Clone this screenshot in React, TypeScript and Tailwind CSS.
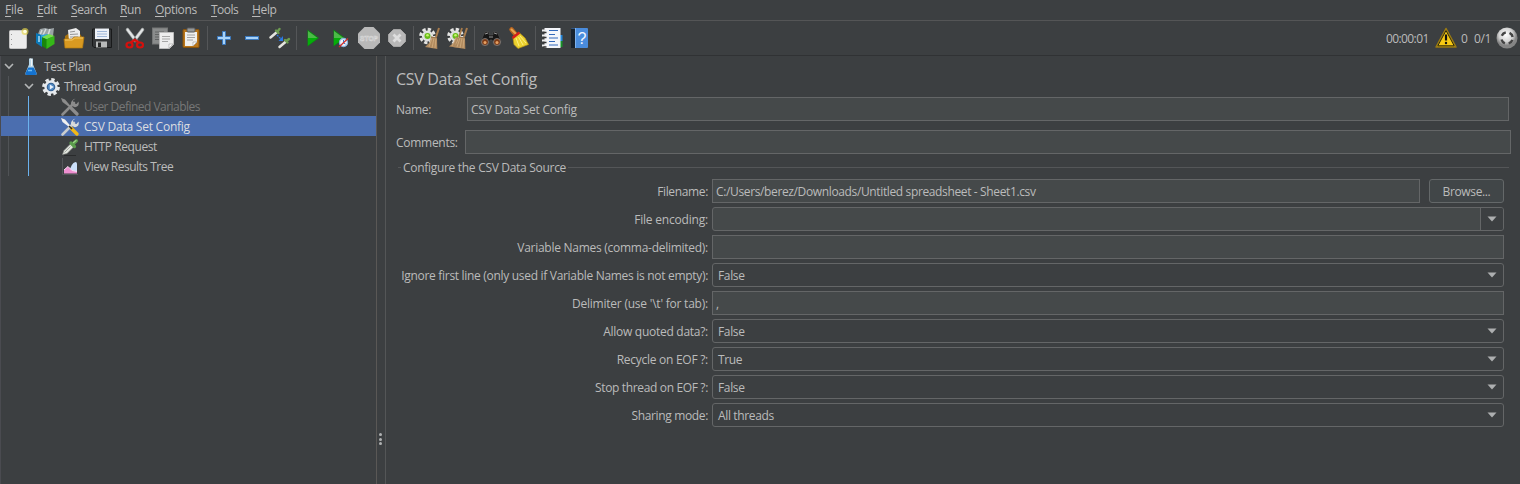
import type { ReactNode } from "react";

type IconProps = { children: ReactNode; size?: string; box?: string };

function Icon({ children, size = "w-[22px] h-[22px]", box = "0 0 22 22" }: IconProps) {
  return (
    <svg viewBox={box} className={"block shrink-0 overflow-visible " + size} fill="none">
      {children}
    </svg>
  );
}

const NewIcon = () => (
  <Icon>
    <rect x="2.500" y="3.500" width="17" height="18" rx="1" fill="#ececec" stroke="#c4c4c4" />
    <path d="M4.500 7v1M4.500 12v1M4.500 17v1" stroke="#999" />
    <circle cx="18" cy="4.500" r="3.500" fill="#e8d84c" opacity=".65" />
    <circle cx="18" cy="4.500" r="1.800" fill="#fffde0" />
  </Icon>
);
const TemplateIcon = () => (
  <Icon>
    <path d="M3 7l2-5 5-1 4 1 5-1-1 8-9 3z" fill="#9ba3a6" />
    <path d="M7 3l-2 5M11 2L8 8M15 2l-2 6" stroke="#d5dadd" strokeWidth="1.500" />
    <path d="M1 6l6 2v12l-6-4z" fill="#0a78b8" />
    <path d="M6 8l7-1v10l-6 2z" fill="#2ba3e0" />
    <path d="M7 10l5 2v10l-5-3z" fill="#19860c" />
    <path d="M11.500 12l8-3v8l-8 5z" fill="#35b818" />
    <path d="M7 10l7-3 5.500 2-8 3z" fill="#77e04b" />
    <path d="M4 9v6" stroke="#d8f4ff" strokeWidth="1.500" opacity=".8" />
  </Icon>
);
const OpenIcon = () => (
  <Icon>
    <path d="M2 9l3-2h12l2 3v9H2z" fill="#a87310" />
    <path d="M5 3l8-2 4 3v10H6z" fill="#ececec" />
    <path d="M7 5l5-.7M7 7.500l8-.5M7 10h8" stroke="#969696" />
    <path d="M1 12h8l2-2h10l-1.500 11H2z" fill="#d99a21" stroke="#b57b10" strokeWidth=".7" />
    <path d="M2 13h7.500l2-2H20" stroke="#f6c967" />
  </Icon>
);
const SaveIcon = () => (
  <Icon>
    <path d="M1.500 2h19v18.500H3L1.500 19z" fill="#353739" stroke="#191a1b" />
    <rect x="4" y="1.500" width="14" height="10.500" fill="#edf1f7" />
    <path d="M6 4.500h10M6 7h10M6 9.500h10" stroke="#9eb6d8" />
    <rect x="5" y="14.500" width="11" height="6" fill="#b9bbbb" />
    <rect x="7" y="15.500" width="3" height="4.500" fill="#252627" />
  </Icon>
);
const CutIcon = () => (
  <Icon>
    <path d="M2 3q0-2 2-2l10 13-3 1zM20 3q0-2-2-2L8 14l3 1z" fill="#e2e5e5" stroke="#9a9e9e" strokeWidth=".6" />
    <ellipse cx="5.500" cy="18" rx="3" ry="2.500" stroke="#d5100d" strokeWidth="2.200" />
    <ellipse cx="16" cy="18" rx="3" ry="2.500" stroke="#d5100d" strokeWidth="2.200" />
    <path d="M6.500 15.500l4.300-2.500 4.200 2.500" stroke="#d5100d" strokeWidth="2.400" />
  </Icon>
);
const CopyIcon = () => (
  <Icon>
    <rect x=".5" y="1" width="15" height="16" fill="#8a8c8c" stroke="#747676" />
    <path d="M3 5h9M3 7.500h5M3 10h4M3 12.500h4" stroke="#626464" />
    <path d="M7.500 5.500h14v12l-4 4h-10z" fill="#ededed" stroke="#bcbcbc" />
    <path d="M10 9.500h8M10 12h8M10 14.500h6" stroke="#a7a7a7" />
    <path d="M21 17h-4v4z" fill="#fff" stroke="#aaa" strokeWidth=".7" />
  </Icon>
);
const PasteIcon = () => (
  <Icon>
    <rect x="3" y="2.500" width="16" height="18" rx="1" fill="#b9761a" stroke="#87530d" />
    <path d="M5 5h12v10l-4 4H5z" fill="#efefed" />
    <rect x="7" y="1" width="8" height="4" rx="1" fill="#96999a" stroke="#595b5c" />
    <path d="M7 8h8M7 10.500h8M7 13h6" stroke="#a2a2a2" />
    <path d="M17 15h-4v4z" fill="#fff" stroke="#999" strokeWidth=".6" />
  </Icon>
);
const PlusIcon = () => (
  <Icon>
    <path d="M9.500 4.500h3v5h5v3h-5v5h-3v-5h-5v-3h5z" fill="#a7d2f8" stroke="#3a78bd" />
  </Icon>
);
const MinusIcon = () => (
  <Icon>
    <rect x="4.500" y="9.500" width="13" height="3" fill="#a7d2f8" stroke="#3a78bd" />
  </Icon>
);
const ToggleIcon = () => (
  <Icon>
    <path d="M1.500 10.500L8 5" stroke="#e4e4df" strokeWidth="2.500" strokeLinecap="round" />
    <path d="M7 3.500l2.500 2.500M8.500 4.500L10.500 2" stroke="#6c9c50" strokeWidth="2.400" strokeLinecap="round" />
    <path d="M10.500 20L17 14.500" stroke="#e4e4df" strokeWidth="2.500" strokeLinecap="round" />
    <path d="M16 13l2.500 2.500M17.500 14l2.500-2" stroke="#6c9c50" strokeWidth="2.400" strokeLinecap="round" />
    <path d="M8 8l4 4" stroke="#2b78e4" strokeWidth="1.300" strokeDasharray="2 1" />
    <path d="M14 9v5H9.500z" fill="#2b78e4" />
  </Icon>
);
const PlayShape = () => (
  <>
    <path d="M5.500 2.500l11.500 8.500-11.500 8.500z" fill="#0a8a12" />
    <path d="M6 4l9.500 7H6z" fill="#4cba48" />
    <path d="M6 11h10l-10 7.500z" fill="#05ad0a" />
  </>
);
const PlayIcon = () => (
  <Icon>
    <PlayShape />
  </Icon>
);
const PlayNoTimerIcon = () => (
  <Icon>
    <g transform="translate(-2 0)">
      <PlayShape />
    </g>
    <circle cx="13.500" cy="15.500" r="4" fill="#eef4fb" stroke="#8eb2dd" strokeWidth="1.300" />
    <path d="M13.500 13v3l2 1" stroke="#3977c9" />
    <path d="M9 20l9-8.500" stroke="#d22d2a" strokeWidth="1.300" />
  </Icon>
);
const StopIcon = () => (
  <Icon>
    <path d="M6.500 0h9L22 6.500v9L15.500 22h-9L0 15.500v-9z" fill="#b9b9b9" />
    <text x="2" y="14" textLength="18" lengthAdjust="spacingAndGlyphs" fontSize="8" fontWeight="700" fontFamily="Liberation Sans, sans-serif" fill="#b4b4b4" stroke="#dcdcdc" strokeWidth=".6" className="tracking-normal">STOP</text>
  </Icon>
);
const ShutdownIcon = () => (
  <Icon>
    <path d="M7.500 2.500h7l5 5v7l-5 5h-7l-5-5v-7z" fill="#b8b8b8" stroke="#b0b0b0" strokeWidth=".8" />
    <path d="M7.500 7.500l7 7M14.500 7.500l-7 7" stroke="#dedede" strokeWidth="2.800" />
  </Icon>
);
const GearBroom = ({ double = false }: { double?: boolean }) => (
  <Icon>
    <circle cx="8.500" cy="9" r="6.800" stroke="#e4e4e2" strokeWidth="3" strokeDasharray="3.300 2.040" />
    <circle cx="8.500" cy="9" r="5" fill="#dcdedb" stroke="#f1f1f1" />
    <circle cx="8.500" cy="9" r="3" fill="#68bc18" />
    <circle cx="8.500" cy="8.300" r="1.300" fill="#c5f36c" />
    {double && (
      <>
        <path d="M15 1l-3 9" stroke="#a97c4c" strokeWidth="1.800" />
        <path d="M8.500 10l5 1v10L2 19.500l5-4z" fill="#b18a5e" />
        <path d="M9 11l-4 8M11 12l-3 8" stroke="#d3af80" strokeWidth=".8" />
      </>
    )}
    <path d="M20 1l-3 9" stroke="#a97c4c" strokeWidth="2" />
    <path d="M12 9.500l6 1 .3 11.500L6 20l5-5z" fill="#b18a5e" />
    <path d="M13 11l-3 9M15 11l-2 10M17 11l-1 10" stroke="#d3af80" strokeWidth=".8" />
    <path d="M12 10l6 1" stroke="#8f693f" strokeWidth=".7" />
  </Icon>
);
const BinocularsIcon = () => (
  <Icon>
    <path d="M3 9l2-4h4v3h4V5h4l2 4 2 5-1 4h-6l-2-5h-2l-2 5H2l-1-4z" fill="#171717" stroke="#4f4f4f" strokeWidth=".7" />
    <path d="M5 7l3-1M14 6l3 1M9 10h4" stroke="#9a9a9a" />
    <circle cx="5" cy="15" r="3.500" fill="#7e3b16" stroke="#777" />
    <circle cx="17" cy="15" r="3.500" fill="#7e3b16" stroke="#777" />
    <circle cx="5" cy="15.500" r="1.500" fill="#e6a062" />
    <circle cx="17" cy="15.500" r="1.500" fill="#e6a062" />
  </Icon>
);
const BroomIcon = () => (
  <Icon>
    <path d="M3.500 2.500l5 6" stroke="#b76520" strokeWidth="4.500" strokeLinecap="round" />
    <path d="M3.500 2.500l4 4" stroke="#e9a451" strokeWidth="2" strokeLinecap="round" />
    <path d="M5 11l6.500-5 5.500 5 3.500 6.500L10 21.500l-4-4z" fill="#ecd22f" stroke="#bb9815" strokeWidth=".7" />
    <path d="M8 11l3 8M10.500 10l4.500 8M12 9l6 7" stroke="#fff289" strokeWidth=".9" />
    <path d="M4.500 11l7-5.500" stroke="#d51f19" strokeWidth="2.500" />
  </Icon>
);
const NotebookIcon = () => (
  <Icon>
    <path d="M17 8h4.500v6H17z" fill="#2588dc" />
    <path d="M17 14h4.500v6H17z" fill="#169329" />
    <rect x="3.500" y="1" width="16" height="20" fill="#f4f6fa" />
    <path d="M8 3.500h9M8 7.500h6M8 11h9M8 14.500h6M8 18h9" stroke="#3269bb" />
    <path d="M1 3.500h4M1 8.500h4M1 13.500h4M1 18.500h4" stroke="#ededed" strokeWidth="2" />
    <path d="M2.500 5.500h3M2.500 10.500h3M2.500 15.500h3M2.500 20h3" stroke="#343434" strokeWidth="1.500" />
  </Icon>
);
const HelpIcon = () => (
  <Icon>
    <rect x="2" y="1" width="17" height="20" rx="1" fill="#4a8cdc" />
    <path d="M2 1.500h4V21H2z" fill="#18222d" />
    <path d="M6.500 1v20" stroke="#7fb2eb" />
    <text x="12.700" y="16.500" textAnchor="middle" fontSize="16" fontFamily="Liberation Sans, sans-serif" fill="#f3f7ff">?</text>
  </Icon>
);
const WarningIcon = () => (
  <Icon>
    <path d="M11 1.500l10 18.500H1z" fill="#f6c914" stroke="#9b7b12" strokeWidth="1.500" strokeLinejoin="round" />
    <path d="M11 3.500l8.200 15.300H2.800z" stroke="#2c260b" strokeLinejoin="round" />
    <path d="M11 7.500v6" stroke="#111" strokeWidth="2.200" />
    <circle cx="11" cy="16" r="1.200" fill="#111" />
  </Icon>
);
const StatusIcon = () => (
  <Icon>
    <defs>
      <radialGradient id="ball" cx=".45" cy=".35">
        <stop stopColor="#fff" />
        <stop offset=".65" stopColor="#d4d4d4" />
        <stop offset="1" stopColor="#858585" />
      </radialGradient>
    </defs>
    <circle cx="11" cy="11" r="10.500" fill="url(#ball)" />
    <circle cx="11" cy="11" r="5.700" stroke="#444" strokeWidth="2.400" strokeDasharray="5 3.953" strokeDashoffset="-1.976" />
  </Icon>
);

const small = "w-[18px] h-[18px]";
const FlaskIcon = () => (
  <Icon size={small} box="0 0 18 18">
    <path d="M7 .5h4v6L14.500 15q.5 2-1 2h-9q-1.500 0-1-2L7 6.500z" fill="#b9d6e6" />
    <path d="M8 1h1.500v7" stroke="#f2f6f8" />
    <path d="M6.300 9.500h5.400l2.800 5.500q.5 2-1 2h-9q-1.500 0-1-2z" fill="#1473d0" />
    <path d="M6 12.500h4" stroke="#6cbcf6" strokeWidth="1.500" />
  </Icon>
);
const GearIcon = () => (
  <Icon size={small} box="0 0 18 18">
    <circle cx="9" cy="9" r="7.500" stroke="#e5e8ea" strokeWidth="2.800" strokeDasharray="3.400 2.490" />
    <circle cx="9" cy="9" r="5.500" fill="#356193" stroke="#e6eaee" strokeWidth="2.400" />
    <circle cx="9" cy="9" r="3.200" fill="#4f88c1" />
    <path d="M7.800 6.500l4 2.500-4 2.500z" fill="#e8f3ff" />
  </Icon>
);
const ToolsIcon = ({ dim = false }: { dim?: boolean }) => (
  <Icon size={small} box="0 0 18 18">
    <path d="M1.500 16.500L13 5" stroke={dim ? "#8c8c8c" : "#c9cccd"} strokeWidth="2.600" strokeLinecap="round" />
    <path d="M14.500.5l-2.500 2 .5 3 3 .5 2-2.500q1 3.500-1.500 5t-4.500-.5q-2.500-2-1-4.500t4-3z" fill={dim ? "#8c8c8c" : "#d9dcdd"} />
    <path d="M0 0l4 1.500 6 7-1.200 1L1.500 4z" fill={dim ? "#8c8c8c" : "#f0f0f0"} />
    <path d="M10.500 10.500l5.500 5.500" stroke={dim ? "#8c8c8c" : "#f0b818"} strokeWidth="3.400" strokeLinecap="round" />
    {!dim && <path d="M8 8l3 3" stroke="#302d26" strokeWidth="1.600" />}
  </Icon>
);
const DropperIcon = () => (
  <Icon size={small} box="0 0 18 18">
    <path d="M1.500 16.500l1.500-4L10 5.500l3 3-7 7z" fill="#e2e6df" stroke="#8b8f89" strokeWidth=".6" />
    <path d="M3.500 14.500l6-6" stroke="#a6aaa3" />
    <path d="M10 5l3.500 3.500M12 6l3.500-3.200" stroke="#5a9c4c" strokeWidth="3.200" strokeLinecap="round" />
    <path d="M12.500 4.500L15 2.500" stroke="#a0d48b" strokeWidth="1.200" strokeLinecap="round" />
    <path d="M3 17.500h12" stroke="#292b2c" />
  </Icon>
);
const ChartIcon = () => (
  <Icon size={small} box="0 0 18 18">
    <path d="M1.500 0v16.500H17" stroke="#54575a" />
    <path d="M8 15q2-10 6.500-11 1.500 0 1.500 2v9z" fill="#cbe0fb" />
    <path d="M3 15.500v-3.500l4-3.500 4 4 5 1v2z" fill="#ee8fd0" />
    <path d="M3 12l4-3.500 4 4 5 1" stroke="#f8dff2" />
  </Icon>
);

function Separator() {
  return <div className="mx-[5px] h-6 w-px shrink-0 bg-[#545658]" />;
}

const menus = [
  { label: "File", cls: "w-8 tracking-[-0.200px]" },
  { label: "Edit", cls: "w-[34px]" },
  { label: "Search", cls: "w-[49px] tracking-[-0.400px]" },
  { label: "Run", cls: "w-[35px]" },
  { label: "Options", cls: "w-14" },
  { label: "Tools", cls: "w-[41px] tracking-[-0.550px]" },
  { label: "Help", cls: "w-10" },
];

function MenuBar() {
  return (
    <nav className="flex h-[21px] border-b border-[#545556] pl-[5px] leading-5">
      {menus.map((m) => (
        <div key={m.label} className={"shrink-0 " + m.cls}>
          <span className="underline decoration-1 underline-offset-2">{m.label[0]}</span>
          {m.label.slice(1)}
        </div>
      ))}
    </nav>
  );
}

function Toolbar() {
  return (
    <div className="flex h-[35px] items-center border-b border-[#303234] pl-[7px]">
      <div className="flex gap-[6px]">
        <NewIcon />
        <TemplateIcon />
        <OpenIcon />
        <SaveIcon />
      </div>
      <Separator />
      <div className="flex gap-[6px]">
        <CutIcon />
        <CopyIcon />
        <PasteIcon />
      </div>
      <Separator />
      <div className="flex gap-[6px]">
        <PlusIcon />
        <MinusIcon />
        <ToggleIcon />
      </div>
      <Separator />
      <div className="flex gap-[6px]">
        <PlayIcon />
        <PlayNoTimerIcon />
        <StopIcon />
        <ShutdownIcon />
      </div>
      <Separator />
      <div className="flex gap-[6px]">
        <GearBroom />
        <GearBroom double />
      </div>
      <Separator />
      <div className="flex gap-[6px]">
        <BinocularsIcon />
        <BroomIcon />
      </div>
      <Separator />
      <div className="flex gap-[6px]">
        <NotebookIcon />
        <HelpIcon />
      </div>
      <div className="ml-auto flex items-center pr-[2px]">
        <span className="w-[49px] pt-0.5 tracking-[-0.600px]">00:00:01</span>
        <WarningIcon />
        <span className="ml-1 w-[13px] pt-0.5">0</span>
        <span className="w-[22px] pt-0.5">0/1</span>
        <StatusIcon />
      </div>
    </div>
  );
}

const Chevron = () => (
  <Icon size="w-[10px] h-[10px]" box="0 0 10 10">
    <path d="M1 2l4 4 4-4" stroke="#b4b6b7" strokeWidth="1.600" />
  </Icon>
);

function Tree() {
  return (
    <aside className="w-[377px] shrink-0 border-l border-r border-l-[#4a4b50] border-r-[#5a5856]">
      <div className="flex h-5 items-center pl-[3px] pt-0.5 tracking-[-0.450px]">
        <Chevron />
        <span className="ml-[8px] mr-[4px]"><FlaskIcon /></span>
        Test Plan
      </div>
      <div className="flex">
        <div className="ml-[7px] h-[100px] w-px bg-[#505356]" />
        <div className="grow">
          <div className="flex h-5 items-center pl-[15px] pt-0.5 tracking-[-0.500px]">
            <Chevron />
            <span className="ml-[8px] mr-[4px]"><GearIcon /></span>
            Thread Group
          </div>
          <div className="flex">
            <div className="-mr-px ml-[19px] z-10 h-20 w-px bg-[#6bb2ee]" />
            <div className="grow">
              {[
                { t: "User Defined Variables", i: <ToolsIcon dim />, c: "text-[#777777] tracking-[-0.530px]" },
                { t: "CSV Data Set Config", i: <ToolsIcon />, c: "bg-[#4b6eaf] shadow-[-27px_0_0_#4b6eaf] text-[#dcdee1] tracking-[-0.230px]" },
                { t: "HTTP Request", i: <DropperIcon />, c: "tracking-[-0.420px]" },
                { t: "View Results Tree", i: <ChartIcon />, c: "tracking-[-0.500px]" },
              ].map((r) => (
                <div key={r.t} className={"flex h-5 items-center gap-[5px] pl-[33px] pt-0.5 " + r.c}>
                  {r.i}
                  {r.t}
                </div>
              ))}
            </div>
          </div>
        </div>
      </div>
    </aside>
  );
}

const Arrow = () => (
  <svg viewBox="0 0 10 6" className="h-[6px] w-[10px]">
    <path d="M.5.500h9L5 5.500z" fill="#adafb0" />
  </svg>
);

type RowDef = { label: string; kind: "file" | "edit" | "text" | "combo"; value: string; cls: string };
const rows: RowDef[] = [
  { label: "Filename:", kind: "file", value: "C:/Users/berez/Downloads/Untitled spreadsheet - Sheet1.csv", cls: "" },
  { label: "File encoding:", kind: "edit", value: "", cls: "tracking-[-0.200px]" },
  { label: "Variable Names (comma-delimited):", kind: "text", value: "", cls: "tracking-[-0.270px]" },
  { label: "Ignore first line (only used if Variable Names is not empty):", kind: "combo", value: "False", cls: "tracking-[-0.305px]" },
  { label: "Delimiter (use '\\t' for tab):", kind: "text", value: ",", cls: "tracking-[-0.220px]" },
  { label: "Allow quoted data?:", kind: "combo", value: "False", cls: "tracking-[-0.270px]" },
  { label: "Recycle on EOF ?:", kind: "combo", value: "True", cls: "tracking-[-0.270px]" },
  { label: "Stop thread on EOF ?:", kind: "combo", value: "False", cls: "" },
  { label: "Sharing mode:", kind: "combo", value: "All threads", cls: "" },
];

function TextField({ value = "" }: { value?: string }) {
  return <div className="flex h-6 grow items-center border border-[#646667] bg-[#45494a] pl-[3px] pt-0.5">{value}</div>;
}

function Field({ kind, value }: { kind: RowDef["kind"]; value: string }) {
  if (kind === "file")
    return (
      <div className="flex grow gap-[9px] tracking-[-0.365px]">
        <TextField value={value} />
        <button className="h-6 w-[75px] rounded-[3px] border border-[#646869] bg-[#414648] pt-0.5 leading-5">Browse...</button>
      </div>
    );
  if (kind === "text") return <TextField value={value} />;
  return (
    <div className={"flex h-6 grow items-center justify-between overflow-hidden rounded-[3px] border border-[#646667] pl-[5px] " + (kind === "edit" ? "bg-[#45494a]" : "")}>
      <span className="pt-0.5">{value}</span>
      <span className={"flex h-full w-[23px] items-center justify-center " + (kind === "edit" ? "border-l border-[#646667] bg-[#3c3f41]" : "")}>
        <Arrow />
      </span>
    </div>
  );
}

function ConfigPanel() {
  return (
    <main className="min-w-0 grow border-l border-[#545657] pl-[10px]">
      <h1 className="mt-[12px] h-[22px] text-[16px] leading-[22px] tracking-[-0.330px]">CSV Data Set Config</h1>
      <div className="mt-[7px] flex h-6 items-center pr-[11px]">
        <span className="w-[71px] pt-0.5">Name:</span>
        <div className="flex grow tracking-[-0.240px]">
          <TextField value="CSV Data Set Config" />
        </div>
      </div>
      <div className="mt-[9px] flex h-6 items-center pr-[9px]">
        <span className="w-[69px] pt-0.5 tracking-[-0.280px]">Comments:</span>
        <TextField />
      </div>
      <div className="ml-[2px] mt-[5px] flex h-[18px] items-center pr-[11px]">
        <span className="mb-px mr-[2px] h-px w-[3px] bg-[#545658]" />
        <span className="tracking-[-0.300px]">Configure the CSV Data Source</span>
        <span className="mb-px ml-[2px] h-px grow bg-[#545658]" />
      </div>
      <div className="mt-[2px] flex flex-col gap-1 pr-4">
        {rows.map((r) => (
          <div key={r.label} className="flex h-6 items-center">
            <span className={"mr-1 w-[312px] whitespace-nowrap pt-0.5 text-right " + r.cls}>{r.label}</span>
            <Field kind={r.kind} value={r.value} />
          </div>
        ))}
      </div>
    </main>
  );
}

export default function App() {
  return (
    <div className="flex h-[484px] w-[1520px] flex-col overflow-hidden bg-[#3c3f41] font-['Open_Sans','Noto_Sans',sans-serif] text-[12px] leading-5 tracking-[-0.350px] text-[#bbbbbb]">
      <MenuBar />
      <Toolbar />
      <div className="flex grow">
        <Tree />
        <div className="flex w-2 shrink-0 flex-col items-center gap-[1.500px] pr-px pt-[377px]">
          <span className="size-[3px] rounded-full bg-[#b0b2b3]" />
          <span className="size-[3px] rounded-full bg-[#b0b2b3]" />
          <span className="size-[3px] rounded-full bg-[#b0b2b3]" />
        </div>
        <ConfigPanel />
      </div>
    </div>
  );
}
